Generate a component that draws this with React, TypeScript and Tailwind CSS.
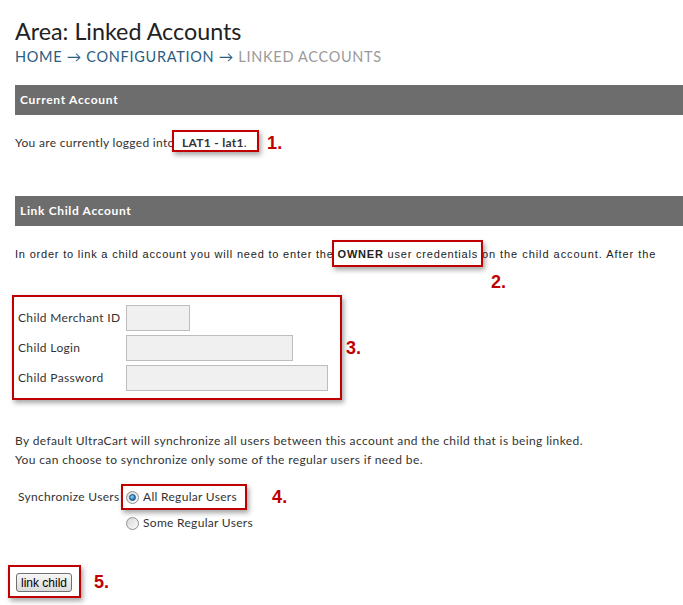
import React from "react";

function Callout({ children }: { children: React.ReactNode }) {
  return (
    <span className="font-['Liberation_Sans',Arial,sans-serif] font-bold text-[18px] leading-[20px] text-[#c00000]">
      {children}
    </span>
  );
}

function Radio({ checked }: { checked?: boolean }) {
  return (
    <span className="relative inline-flex h-[13px] w-[13px] shrink-0 items-center justify-center rounded-full border border-[#8f9090] bg-[linear-gradient(135deg,#d6d6d6,#fbfbfb)]">
      {checked && (
        <span className="h-[7px] w-[7px] rounded-full border border-[#1b4f7a] bg-[radial-gradient(circle_at_40%_35%,#9fdcff,#2a86c5_55%,#124e7c)]" />
      )}
    </span>
  );
}

export default function App() {
  return (
    <div className="h-[605px] w-[683px] overflow-hidden bg-white font-['Lato',sans-serif] text-[#333]">
      <h1 className="pl-[15px] pt-[17px] text-[23.3px] leading-[28px] text-[#222]">
        Area: Linked Accounts
      </h1>
      <div className="mt-[2px] pl-[15px] text-[14.5px] leading-[20px] tracking-[0.7px]">
        <span className="text-[#2b5d80]">HOME → CONFIGURATION →</span>{" "}
        <span className="text-[#9a9a9a]">LINKED ACCOUNTS</span>
      </div>

      <div className="ml-[15px] mt-[18px] flex h-[30px] items-center bg-[#6d6d6d] pl-[5px] text-[12px] font-bold tracking-[0.7px] text-white">
        Current Account
      </div>

      <div className="ml-[15px] mt-[18px] flex h-[20px] items-center text-[12px] tracking-[0.3px]">
        <span>You are currently logged into&nbsp;</span>
        <span className="relative ml-[4px] font-bold">
          LAT1 - lat1
          <span className="absolute bottom-0 -left-[10px] -right-[15px] -top-[4px] border-2 border-[#c00000] shadow-[2px_3px_5px_rgba(0,0,0,0.35)]" />
        </span>
        <span>.</span>
        <span className="ml-[20px]">
          <Callout>1.</Callout>
        </span>
      </div>

      <div className="ml-[15px] mt-[43px] flex h-[30px] items-center bg-[#6d6d6d] pl-[5px] text-[12px] font-bold tracking-[0.65px] text-white">
        Link Child Account
      </div>

      <p className="ml-[15px] mt-[18px] h-[20px] whitespace-nowrap font-['Liberation_Sans',Arial,sans-serif] text-[11px] leading-[20px] tracking-[0.8px] text-[#222]">
        In order to link a child account you will need to enter the{" "}
        <span className="relative">
          <b>OWNER</b> user credentials
          <span className="absolute -bottom-[7px] -left-[6px] -right-[5px] -top-[8px] border-2 border-[#c00000] shadow-[2px_3px_5px_rgba(0,0,0,0.35)]" />
          <span className="absolute -right-[28px] top-[24px] tracking-normal">
            <Callout>2.</Callout>
          </span>
        </span>{" "}
        <span className="tracking-[0.95px]">on the child account. After the</span>
      </p>

      <div className="mt-[31px] flex items-center">
        <div className="ml-[12px] h-[105px] w-[330px] border-2 border-[#c00000] pl-[4px] pt-[8px] shadow-[2px_3px_5px_rgba(0,0,0,0.35)]">
          <div className="flex flex-col gap-[4px] text-[12px] tracking-[0.35px]">
            <div className="flex h-[26px] items-center">
              <span className="w-[108px]">Child Merchant ID</span>
              <span className="h-[26px] w-[64px] border border-[#bdbdbd] bg-[#f0f0f0]" />
            </div>
            <div className="flex h-[26px] items-center">
              <span className="w-[108px]">Child Login</span>
              <span className="h-[26px] w-[167px] border border-[#bdbdbd] bg-[#f0f0f0]" />
            </div>
            <div className="flex h-[26px] items-center">
              <span className="w-[108px]">Child Password</span>
              <span className="h-[26px] w-[202px] border border-[#bdbdbd] bg-[#f0f0f0]" />
            </div>
          </div>
        </div>
        <span className="ml-[4px]">
          <Callout>3.</Callout>
        </span>
      </div>

      <div className="ml-[15px] mt-[31px] text-[12px] leading-[19px] tracking-[0.38px]">
        <div>By default UltraCart will synchronize all users between this account and the child that is being linked.</div>
        <div>You can choose to synchronize only some of the regular users if need be.</div>
      </div>

      <div className="mt-[15px] flex text-[12px] tracking-[0.3px]">
        <span className="flex h-[26px] w-[121px] items-center pl-[18px]">Synchronize Users</span>
        <div className="flex flex-col">
          <div className="flex items-center">
            <label className="flex h-[26px] w-[126px] items-center gap-[4px] border-2 border-[#c00000] pl-[3px] shadow-[2px_3px_5px_rgba(0,0,0,0.35)]">
              <Radio checked />
              <span>All Regular Users</span>
            </label>
            <span className="ml-[25px]">
              <Callout>4.</Callout>
            </span>
          </div>
          <label className="flex h-[26px] items-center gap-[4px] pl-[5px]">
            <Radio />
            <span>Some Regular Users</span>
          </label>
        </div>
      </div>

      <div className="mt-[29px] flex items-center">
        <div className="ml-[8px] h-[33px] w-[73px] border-2 border-[#c00000] pl-[6px] pt-[6px] shadow-[2px_3px_5px_rgba(0,0,0,0.35)]">
          <button className="flex h-[19px] w-[56px] items-center justify-center rounded-[3px] border border-[#707070] bg-[linear-gradient(#f6f6f6,#dcdcdc)] font-['Liberation_Sans',Arial,sans-serif] text-[12px] text-black">
            link child
          </button>
        </div>
        <span className="ml-[13px]">
          <Callout>5.</Callout>
        </span>
      </div>
    </div>
  );
}
